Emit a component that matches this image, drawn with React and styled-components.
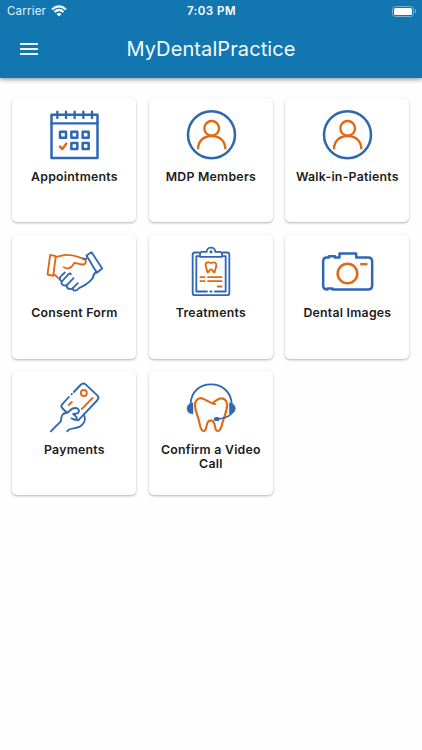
import styled, { createGlobalStyle } from "styled-components";

const BLUE = "#2f67b3";
const ORANGE = "#df6914";

const AppointmentsIcon = () => (
  <Icon viewBox="120 42 180 180">
    <path d="M142.5 74H280.5V204H142.5Z" strokeWidth="7.5" />
    <path
      d="M143 100H280M160 65V84M186 65V84M212 65V84M238 65V84M264 65V84"
      strokeWidth="7"
    />
    <path
      d="M168 125H186V143H168ZM202 125H220V143H202ZM236 125H254V143H236ZM202 159H220V177H202ZM236 159H254V177H236Z"
      strokeWidth="7.5"
    />
    <path d="M168 170L175 177L187 161" stroke={ORANGE} strokeWidth="7.5" />
  </Icon>
);

const PersonIcon = () => (
  <Icon viewBox="117 42 180 180">
    <circle cx="208.5" cy="134" r="70.5" strokeWidth="7.5" />
    <g stroke={ORANGE} strokeWidth="7" strokeLinecap="butt">
      <circle cx="209" cy="115" r="22" />
      <path d="M168 178C168 152 186 138 209 138C232 138 250 152 250 178" />
    </g>
  </Icon>
);

const ConsentIcon = () => (
  <Icon viewBox="29.5 1.5 180 180">
    <g stroke={ORANGE}>
      <path d="M48 43L65 47L57 106L40 102Z" />
      <path d="M64 50C77 49 87 42 100 43C117 43 133 50 148 54C157 57 158 71 147 72C138 73 130 68 121 67C116 72 115 80 105 83C99 86 94 83 89 80" />
      <path d="M58 102C67 104 69 111 75 115" />
    </g>
    <path d="M157 45L172 35L204 84L188 97Z" />
    <path d="M157 54C153 55 151 56 148 56M187 93C179 100 176 108 176 113C165 126 147 138 134 143C126 154 115 151 116 143C107 149 96 144 98 134C88 137 79 131 83 123C76 119 75 111 81 106L92 96" />
    <path d="M83 123L103 101Q108 97 110 101M98 134L118 113M116 143L131 128" />
  </Icon>
);

const TreatmentsIcon = () => (
  <Icon viewBox="30 1.5 180 180">
    <path d="M84 36H72Q65 36 65 43V158Q65 164 72 164H168Q175 164 175 158V43Q175 36 168 36H156" />
    <path d="M84 47H76V153H108M118 153H122M132 153H164V47H156" />
    <path d="M87 49V38Q88 34 94 34H107C107 17 133 17 133 34H146Q153 34 153 40V49Z" />
    <circle cx="120" cy="34" r="2" />
    <g stroke={ORANGE} strokeLinecap="butt">
      <path d="M109 66C114 63 117 69 123 67C130 64 137 67 136 76C136 82 132 84 131 95C127 99 126 87 120 87C114 87 113 99 109 95C108 84 104 82 104 75C103 70 105 67 109 66Z" />
      <path d="M86 110H103M109 110H154M86 122H103M109 122H154M138 138H154" />
    </g>
  </Icon>
);

const CameraIcon = () => (
  <Icon viewBox="26.5 1.5 180 180">
    <path
      d="M56 51H62V47H80V51H94V39H144V51H180Q192 51 192 63V135Q192 147 180 147H73V144H58V147Q45 147 45 135V63Q45 51 56 51Z"
      strokeWidth="7.5"
    />
    <g stroke={ORANGE} strokeWidth="7.5" strokeLinecap="butt">
      <circle cx="118" cy="99" r="29.5" />
      <path d="M156 71H178" />
    </g>
  </Icon>
);

const PaymentsIcon = () => (
  <Icon viewBox="29.5 6 180 180">
    <path d="M104 66L84 88Q79 94 84 99L98 113M119 51L139 30Q147 22 155 29L190 62Q196 68 190 75L135 133Q131 138 125 133M112 58L113 57" />
    <path d="M50 169L80 139C82 132 80 124 86 118C91 112 99 116 104 110C109 104 115 99 123 99C131 98 137 106 133 112C130 117 123 117 117 117L126 125C131 130 126 137 119 133L112 130" />
    <path d="M149 119C157 135 148 148 137 155C126 161 112 159 104 164L99 169" />
    <g stroke={ORANGE}>
      <circle cx="149" cy="54" r="9" />
      <path d="M175 69L143 102M104 90L113 81" />
    </g>
  </Icon>
);

const VideoCallIcon = () => (
  <Icon viewBox="30 6 180 180">
    <path
      d="M132 87C120 87 108 75 96 71C83 66 71 76 72 91C72 111 81 121 85 142C88 160 92 169 99 168C111 167 101 137 119 136C138 136 127 167 139 168C147 169 152 156 155 142C160 120 169 109 168 89C168 75 157 67 145 71C139 73 134 78 127 82"
      stroke={ORANGE}
      strokeWidth="6.5"
    />
    <path
      d="M59 85C61 50 86 28 120 28C154 28 179 50 182 85"
      strokeWidth="5.5"
    />
    <path
      d="M66 84V117C55 117 48 111 48 100C48 90 56 84 66 84ZM175 84V117C186 117 193 111 193 100C193 90 185 84 175 84Z"
      fill={BLUE}
      strokeWidth="1"
    />
    <path d="M183 114C174 126 159 130 140 132" strokeWidth="4.5" />
    <ellipse cx="137" cy="132" rx="9" ry="6" fill={BLUE} stroke="none" />
  </Icon>
);

const menuItems = [
  { label: "Appointments", icon: AppointmentsIcon },
  { label: "MDP Members", icon: PersonIcon },
  { label: "Walk-in-Patients", icon: PersonIcon },
  { label: "Consent Form", icon: ConsentIcon },
  { label: "Treatments", icon: TreatmentsIcon },
  { label: "Dental Images", icon: CameraIcon },
  { label: "Payments", icon: PaymentsIcon },
  { label: "Confirm a Video Call", icon: VideoCallIcon },
];

const App = () => {
  return (
    <Screen>
      <GlobalStyle />
      <Header>
        <StatusBar>
          <Carrier>
            Carrier
            <Wifi viewBox="0 0 16 12">
              <path d="M1 4.5Q8-1.7 15 4.5M3.5 7Q8 3 12.5 7" />
              <path d="M5.5 9Q8 7 10.5 9L8 11.5Z" fill="#fff" stroke="none" />
            </Wifi>
          </Carrier>
          <Clock>7:03 PM</Clock>
          <BatteryArea>
            <Battery>
              <BatteryLevel />
            </Battery>
            <BatteryTip />
          </BatteryArea>
        </StatusBar>
        <Toolbar>
          <MenuButton aria-label="Menu">
            <MenuLine />
            <MenuLine />
            <MenuLine />
          </MenuButton>
          <Title>MyDentalPractice</Title>
        </Toolbar>
      </Header>
      <Grid>
        {menuItems.map(({ label, icon: ItemIcon }) => (
          <Card key={label}>
            <ItemIcon />
            <Label>{label}</Label>
          </Card>
        ))}
      </Grid>
    </Screen>
  );
};
export default App;

const GlobalStyle = createGlobalStyle`
  * {
    box-sizing: border-box;
  }
  body {
    margin: 0;
    background: #fefefe;
    font-family: Inter, "Liberation Sans", sans-serif;
  }
`;
const Screen = styled.div`
  min-height: 750px;
  background: #fefefe;
`;
const Header = styled.header`
  height: 78px;
  color: #fff;
  background: #1277b1;
  box-shadow: 0 2px 4px rgba(0, 0, 0, 0.35);
`;
const StatusBar = styled.div`
  height: 22px;
  padding: 0 6px 0 7px;
  display: grid;
  grid-template-columns: 1fr auto 1fr;
  align-items: center;
  font-size: 11.5px;
`;
const Carrier = styled.div`
  display: flex;
  align-items: center;
  gap: 5px;
  letter-spacing: 0.2px;
  color: #e3f1fa;
`;
const Wifi = styled.svg`
  width: 16px;
  height: 12px;
  fill: none;
  stroke: #fff;
  stroke-width: 2.2;
`;
const Clock = styled.div`
  font-weight: 600;
  letter-spacing: 0.5px;
`;
const BatteryArea = styled.div`
  display: flex;
  align-items: center;
  justify-content: flex-end;
  gap: 1px;
`;
const Battery = styled.div`
  width: 22px;
  height: 11px;
  padding: 1px;
  border: 1px solid #78b0d2;
  border-radius: 3.5px;
`;
const BatteryLevel = styled.div`
  height: 100%;
  border-radius: 1.5px;
  background: #fff;
`;
const BatteryTip = styled.div`
  width: 1px;
  height: 4px;
  background: #78b0d2;
`;
const Toolbar = styled.div`
  height: 54px;
  padding: 0 19.5px;
  display: grid;
  grid-template-columns: 1fr auto 1fr;
  align-items: center;
`;
const MenuButton = styled.button`
  width: 18.5px;
  padding: 0;
  border: 0;
  background: none;
  display: flex;
  flex-direction: column;
  gap: 3.4px;
`;
const MenuLine = styled.span`
  width: 100%;
  height: 2px;
  background: #e9f5fb;
`;
const Title = styled.h1`
  margin: 0;
  font-size: 20px;
  font-weight: 400;
  letter-spacing: 0.1px;
  color: #f2faff;
`;
const Grid = styled.main`
  padding: 20px 12.4px;
  display: grid;
  grid-template-columns: repeat(3, 124px);
  gap: 12.5px;
`;
const Card = styled.div`
  height: 124px;
  padding-top: 6px;
  display: flex;
  flex-direction: column;
  align-items: center;
  background: #fff;
  border-radius: 5px;
  box-shadow: 0 1px 2.5px rgba(0, 0, 0, 0.3);
`;
const Icon = styled.svg`
  width: 60px;
  height: 60px;
  flex-shrink: 0;
  fill: none;
  stroke: ${BLUE};
  stroke-width: 5.5;
  stroke-linecap: round;
  stroke-linejoin: round;
`;
const Label = styled.div`
  width: 110px;
  margin-top: 5.7px;
  font-size: 12.3px;
  font-weight: 600;
  line-height: 14px;
  letter-spacing: 0.25px;
  text-align: center;
  color: #1c1c1c;
`;
